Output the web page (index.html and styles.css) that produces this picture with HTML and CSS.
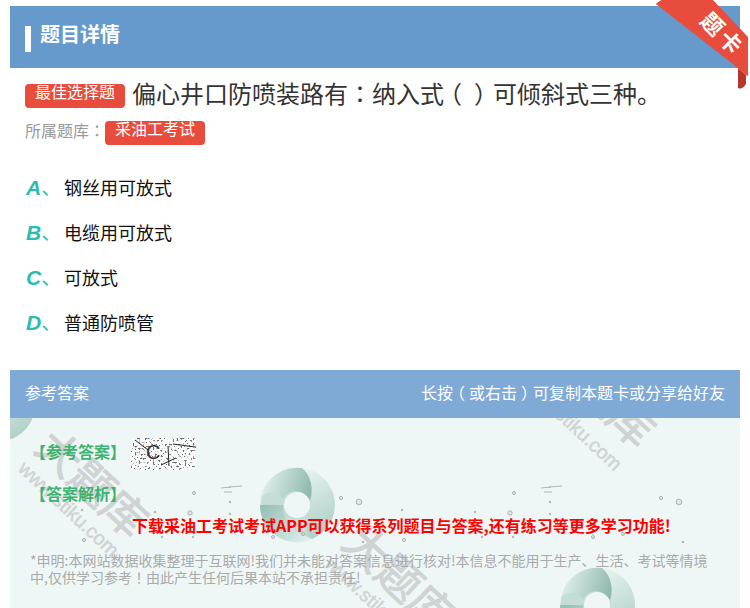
FILE: index.html
```html
<!DOCTYPE html>
<html lang="zh">
<head>
<meta charset="utf-8">
<title>题目详情</title>
<link rel="stylesheet" href="styles.css">
</head>
<body>
<div class="page">
  <section class="card">
    <header class="head"><span class="head-bar"></span><h1 class="head-title">题目详情</h1></header>
    <div class="question">
      <div class="q-line"><span class="tag">最佳选择题</span><span class="q-text">偏心井口防喷装路有<span class="pc" lang="zh-Hant">：</span>纳入式<span class="pc open" lang="zh-Hant">（</span><span class="pc close" lang="zh-Hant">）</span><span class="after-paren">可倾斜式三种。</span></span></div>
      <div class="bank"><span class="bank-label">所属题库<span class="pc" lang="zh-Hant">：</span></span><span class="tag">采油工考试</span></div>
    </div>
    <ul class="options">
      <li class="option"><span class="opt-key"><b>A</b>、</span><span>钢丝用可放式</span></li>
      <li class="option"><span class="opt-key"><b>B</b>、</span><span>电缆用可放式</span></li>
      <li class="option"><span class="opt-key"><b>C</b>、</span><span>可放式</span></li>
      <li class="option"><span class="opt-key"><b>D</b>、</span><span>普通防喷管</span></li>
    </ul>
    <div class="answer-head"><span>参考答案</span><span>长按<span class="pc open-sm" lang="zh-Hant">（</span>或右击<span class="pc close-sm" lang="zh-Hant">）</span>可复制本题卡或分享给好友</span></div>
    <div class="answer">
      <svg class="art" width="730" height="190" viewBox="0 0 730 190" aria-hidden="true">
        <defs>
          <linearGradient id="g1" x1="0" y1="0.4" x2="1" y2="0.6"><stop offset="0" stop-color="#e4f1ee"/><stop offset="1" stop-color="#8fb9ae"/></linearGradient>
          <linearGradient id="g2" x1="0" y1="0" x2="0.3" y2="1"><stop offset="0" stop-color="#e8f5f1"/><stop offset="1" stop-color="#b2d1c9"/></linearGradient>
          <linearGradient id="g3" x1="0" y1="0.2" x2="1" y2="0.9"><stop offset="0" stop-color="#98c2b8"/><stop offset="1" stop-color="#e2f1ed"/></linearGradient>
          <g id="ring">
            <circle class="ring-base" r="36.5"/>
            <path fill="url(#g3)" d="M-37 0A37 37 0 0 0 15 34C0 28 -14 20 -14 0Z"/>
            <path fill="url(#g2)" d="M5 -37A37 37 0 0 1 15 34C4 30 10 14 14 0C16 -16 12 -28 5 -37Z"/>
            <path fill="url(#g1)" d="M-36 -8A37 37 0 0 1 5 -37C14 -30 17 -15 13 -5C8 -15 -8 -18 -14 -6C-20 -14 -30 -14 -36 -8Z"/>
            <circle class="ring-hole" r="13"/>
          </g>
          <g id="specks" class="specks">
            <circle cx="184" cy="75" r="1.5"/><circle cx="220" cy="84" r="0.8"/><circle cx="331" cy="80" r="1.6"/><circle cx="349" cy="84" r="2.8"/>
            <circle cx="145" cy="94" r="0.8"/><circle cx="180" cy="95" r="2.2"/><circle cx="220" cy="96" r="0.8"/><circle cx="72" cy="92" r="0.8"/>
            <circle cx="74" cy="122" r="1.6"/><circle cx="152" cy="119" r="0.8"/><circle cx="183" cy="119" r="0.8"/><circle cx="263" cy="119" r="1.5"/><circle cx="293" cy="116" r="1.5"/><circle cx="353" cy="124" r="0.8"/>
            <path d="M211 70l10-1M219 69l13-1M214 74l8 0"/>
          </g>
          <filter id="noise" x="0" y="0" width="100%" height="100%">
            <feTurbulence type="fractalNoise" baseFrequency="0.5" numOctaves="2" seed="7"/>
            <feColorMatrix values="0 0 0 0 0.15  0 0 0 0 0.15  0 0 0 0 0.15  0 0 0 -9 3.8"/>
          </filter>
        </defs>
        <g class="wm">
          <text class="wm-big" transform="translate(23 32) rotate(43)">大题库</text>
          <text class="wm-url" transform="translate(7 52) rotate(43)">www.stiku.com</text>
          <text class="wm-big" transform="translate(530 -58) rotate(43)">大题库</text>
          <text class="wm-url" transform="translate(510 -34) rotate(43)">www.stiku.com</text>
          <text class="wm-big" transform="translate(330 127) rotate(43)">大题库</text>
          <text class="wm-url" transform="translate(314 147) rotate(43)">www.stiku.com</text>
        </g>
        <use href="#ring" x="-13" y="-13"/>
        <use href="#ring" x="287" y="87"/>
        <use href="#ring" x="587" y="187"/>
        <use href="#specks"/>
        <use href="#specks" x="320"/>
      </svg>
      <div class="answer-body">
        <div class="ans-row">
          <span class="ans-label">【参考答案】</span>
          <span class="scan">
            <svg class="scan-noise" width="65" height="32" viewBox="0 0 65 32" aria-hidden="true">
              <rect width="65" height="32" fill="#f9fbfa"/>
              <rect width="65" height="32" filter="url(#noise)"/>
              <path class="scan-line" d="M4 2L17 12M37 8L38 28M30 27L45 20M42 6L64 9"/>
            </svg>
            <span class="scan-letter">C</span>
          </span>
        </div>
        <div class="ans-label ans-second">【答案解析】</div>
        <p class="promo">下载采油工考试考试APP可以获得系列题目与答案,还有练习等更多学习功能!</p>
        <p class="note">*申明:本网站数据收集整理于互联网!我们并未能对答案信息进行核对!本信息不能用于生产、生活、考试等情境中,仅供学习参考<span class="pc" lang="zh-Hant">！</span>由此产生任何后果本站不承担责任!</p>
      </div>
    </div>
  </section>
  <svg class="ribbon" width="100" height="95" viewBox="0 0 100 95" aria-hidden="false">
    <path class="ribbon-dark" d="M8 4Q12 0 20 -2L30 12ZM90 68L98 75V84Q94 90 90 88Z"/>
    <path class="ribbon-main" d="M8 4L14 0H65L100 37V76L98 75L90 68Z"/>
    <text class="ribbon-text" transform="translate(51 22) rotate(45)">题</text>
    <text class="ribbon-text" transform="translate(69 40) rotate(45)">卡</text>
  </svg>
</div>
</body>
</html>
```

FILE: styles.css
```css
* { box-sizing: border-box; }
html, body { margin: 0; padding: 0; }
body {
  width: 750px;
  height: 608px;
  overflow: hidden;
  background: #fff;
  font-family: "Noto Sans CJK SC", "Liberation Sans", sans-serif;
}
.page { position: relative; height: 608px; padding: 6px 10px 0; overflow: hidden; }
.card { width: 730px; display: flex; flex-direction: column; }
.pc { font-family: "Noto Sans CJK TC", sans-serif; }
.open { margin-left: -6px; margin-right: 6px; }
.close { margin-left: 6px; margin-right: -6px; }
.after-paren { margin-left: 1px; }
.open-sm { margin-left: -4px; margin-right: 4px; }
.close-sm { margin-left: 4px; margin-right: -4px; }

.head {
  height: 62px;
  background: #6699cc;
  display: flex;
  align-items: center;
  gap: 9px;
  padding-left: 15px;
}
.head-bar { width: 6px; height: 26px; background: #fff; margin-top: 3px; }
.head-title { margin: -6px 0 0; font-size: 20px; line-height: 28px; font-weight: 700; color: #fff; }

.question { padding: 16px 15px 0; }
.q-line { display: flex; align-items: flex-start; gap: 7px; height: 37px; }
.tag {
  display: block;
  height: 24px;
  padding: 0 10px;
  border-radius: 4px;
  background: #e74c3c;
  color: #fff;
  font-size: 16px;
  line-height: 15px;
  white-space: nowrap;
}
.q-text {
  font-size: 24px;
  line-height: 24px;
  margin-top: -3px;
  color: #333;
  white-space: pre;
}
.bank { display: flex; }
.bank-label { font-size: 16px; line-height: 18px; color: #999; }

.options { list-style: none; margin: 20px 0 0; padding: 0 16px; }
.option {
  display: flex;
  align-items: center;
  height: 45px;
  padding-bottom: 2px;
  font-size: 18px;
  color: #111;
}
.opt-key { width: 38px; color: #2bbcb0; font-size: 20px; }
.opt-key b { font-family: "Liberation Sans", sans-serif; font-style: italic; font-weight: 700; font-size: 21px; }

.answer-head {
  margin-top: 25px;
  height: 48px;
  background: #80aad6;
  color: #fff;
  font-size: 16px;
  display: flex;
  align-items: center;
  justify-content: space-between;
  padding: 0 15px 5px;
  white-space: pre;
}
.answer { position: relative; height: 190px; background: #eef7f6; overflow: hidden; }
.art { position: absolute; left: 0; top: 0; display: block; }
.wm text { fill: #d0d3d3; stroke: #d0d3d3; }
.wm-big { font-size: 44px; font-weight: 400; stroke-width: 1px; }
.wm-url { font-family: "Liberation Sans", sans-serif; font-size: 19.5px; stroke-width: 0.5px; }
.ring-base { fill: #c4ddd6; }
.ring-hole { fill: #eef7f6; }
.specks { fill: #dfe8e6; stroke: #888; stroke-width: 0.6; }

.answer-body { position: relative; padding: 20px 20px 0; }
.ans-row { display: flex; align-items: flex-start; gap: 5px; height: 42px; }
.ans-label { font-size: 16px; line-height: 26px; font-weight: 700; color: #3cb371; width: 96px; white-space: nowrap; }
.scan { position: relative; display: block; width: 65px; height: 32px; }
.scan-noise { display: block; }
.scan-line { stroke: #222; stroke-width: 1; fill: none; }
.scan-letter {
  position: absolute;
  left: 15px;
  top: 1px;
  font: 20px/26px "Liberation Sans", sans-serif;
  color: #333;
}
.ans-second { height: 26px; }
.promo {
  margin: 6px 0 0;
  padding-left: 102px;
  font-size: 16px;
  line-height: 26px;
  font-weight: 700;
  color: #f00;
  white-space: nowrap;
}
.note { margin: 14px 0 0; width: 680px; font-size: 14px; line-height: 17px; color: #aaa; }

.ribbon { position: absolute; right: 2px; top: 0; overflow: visible; }
.ribbon-main { fill: #e74c3c; }
.ribbon-dark { fill: #b8352a; }
.ribbon-text { font-size: 22px; font-weight: 700; fill: #fff; }
```
